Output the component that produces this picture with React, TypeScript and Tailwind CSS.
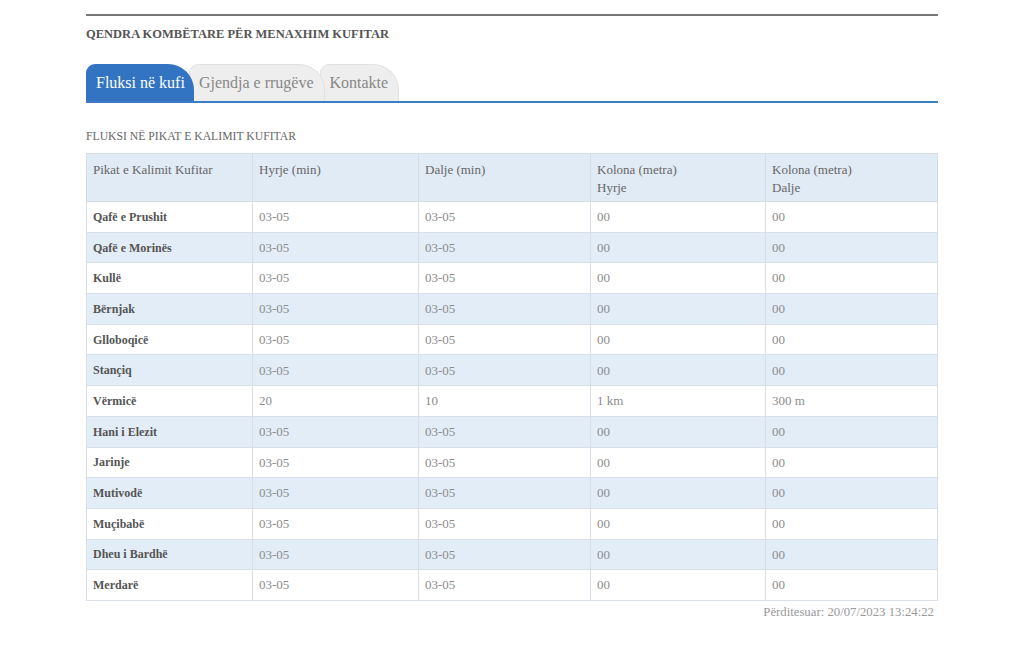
import React from 'react';

const rows: [string, string, string, string, string][] = [
  ['Qafë e Prushit', '03-05', '03-05', '00', '00'],
  ['Qafë e Morinës', '03-05', '03-05', '00', '00'],
  ['Kullë', '03-05', '03-05', '00', '00'],
  ['Bërnjak', '03-05', '03-05', '00', '00'],
  ['Glloboqicë', '03-05', '03-05', '00', '00'],
  ['Stançiq', '03-05', '03-05', '00', '00'],
  ['Vërmicë', '20', '10', '1 km', '300 m'],
  ['Hani i Elezit', '03-05', '03-05', '00', '00'],
  ['Jarinje', '03-05', '03-05', '00', '00'],
  ['Mutivodë', '03-05', '03-05', '00', '00'],
  ['Muçibabë', '03-05', '03-05', '00', '00'],
  ['Dheu i Bardhë', '03-05', '03-05', '00', '00'],
  ['Merdarë', '03-05', '03-05', '00', '00'],
];

const tabs = ['Fluksi në kufi', 'Gjendja e rrugëve', 'Kontakte'];

export default function App() {
  return (
    <div className="min-h-[652px] w-full bg-white font-['Liberation_Serif',serif]">
      <div className="mx-auto w-[852px] pt-[14px]">
        <div className="h-[2px] bg-[#777]" />
        <h1 className="mt-[9px] text-[12.5px] font-bold uppercase text-[#555] leading-[18px]">
          Qendra Kombëtare për Menaxhim Kufitar
        </h1>

        <div className="mt-[22px] flex h-[38px] items-end border-b-2 border-[#3d7bc4]">
          {tabs.map((t, i) => (
            <div
              key={t}
              className={
                i === 0
                  ? 'relative flex h-[37px] items-center rounded-tl-[9px] rounded-tr-[26px] bg-[#3274c2] pl-[10px] pr-[9px] text-[16px] text-white'
                  : 'relative -ml-[5px] flex h-[37px] items-center rounded-tl-[9px] rounded-tr-[26px] border border-b-0 border-[#e2e2e2] bg-[#eeeeee] pl-[9px] pr-[10px] text-[16px] text-[#888]'
              }
              style={{ zIndex: 10 - i }}
            >
              {t}
            </div>
          ))}
        </div>

        <h2 className="mt-[26px] text-[11.7px] uppercase text-[#666] leading-[16px]">
          Fluksi në pikat e kalimit kufitar
        </h2>

        <table className="mt-[8px] w-[851px] table-fixed border-collapse text-[13px]">
          <colgroup>
            <col className="w-[166px]" />
            <col className="w-[166px]" />
            <col className="w-[172px]" />
            <col className="w-[175px]" />
            <col className="w-[172px]" />
          </colgroup>
          <thead>
            <tr className="h-[48px] bg-[#e1ebf5] align-top text-[#666]">
              <th className="border border-[#d6dde5] px-[6px] pt-[7px] text-left font-normal leading-[18px]">Pikat e Kalimit Kufitar</th>
              <th className="border border-[#d6dde5] px-[6px] pt-[7px] text-left font-normal leading-[18px]">Hyrje (min)</th>
              <th className="border border-[#d6dde5] px-[6px] pt-[7px] text-left font-normal leading-[18px]">Dalje (min)</th>
              <th className="border border-[#d6dde5] px-[6px] pt-[7px] text-left font-normal leading-[18px]">
                Kolona (metra)
                <br />
                Hyrje
              </th>
              <th className="border border-[#d6dde5] px-[6px] pt-[7px] text-left font-normal leading-[18px]">
                Kolona (metra)
                <br />
                Dalje
              </th>
            </tr>
          </thead>
          <tbody>
            {rows.map((r, i) => (
              <tr key={r[0]} className={i % 2 === 1 ? 'h-[30.7px] bg-[#e3edf7]' : 'h-[30.7px] bg-white'}>
                <td className="border border-[#d9dfe6] px-[6px] text-[12px] font-bold text-[#555]">{r[0]}</td>
                {r.slice(1).map((c, j) => (
                  <td key={j} className="border border-[#d9dfe6] px-[6px] text-[#8c8c8c]">
                    {c}
                  </td>
                ))}
              </tr>
            ))}
          </tbody>
        </table>

        <div className="mt-[2px] pr-[4px] text-right text-[12.75px] text-[#999]">
          Përditesuar: 20/07/2023 13:24:22
        </div>
      </div>
    </div>
  );
}
